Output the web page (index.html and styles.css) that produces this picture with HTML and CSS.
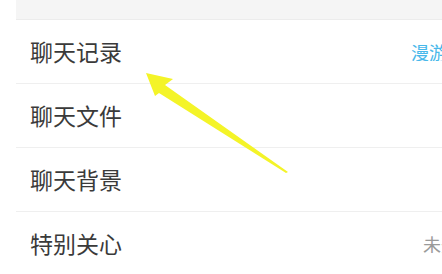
FILE: index.html
```html
<!DOCTYPE html>
<html lang="zh-CN">
<head>
<meta charset="utf-8">
<link rel="stylesheet" href="styles.css">
</head>
<body>
<div class="page">
  <div class="band"></div>
  <div class="list">
    <div class="row"><span class="label">聊天记录</span><span class="val val-blue">漫游记录</span></div>
    <div class="row"><span class="label">聊天文件</span></div>
    <div class="row"><span class="label">聊天背景</span></div>
    <div class="row"><span class="label">特别关心</span><span class="val val-gray">未开启</span></div>
  </div>
  <svg class="arrow" width="442" height="274" viewBox="0 0 442 274">
    <path d="M146 73 L173 79 L165 85 L288 172 L286 173 L159 93 L155 96 Z" fill="#f4f428"/>
  </svg>
</div>
</body>
</html>
```
FILE: styles.css
```css
html, body {
  margin: 0;
  padding: 0;
  background: #ffffff;
  overflow: hidden;
}
.page {
  position: relative;
  width: 442px;
  height: 274px;
  font-family: "Noto Sans CJK SC", "Noto Sans", sans-serif;
}
.band {
  height: 19px;
  margin-left: 16px;
  background: #f5f5f5;
  border-bottom: 1px solid #ececec;
}
.list {
  display: flex;
  flex-direction: column;
}
.row {
  height: 63px;
  margin-left: 16px;
  padding-left: 14px;
  border-bottom: 1px solid #efefef;
  display: flex;
  align-items: center;
  justify-content: space-between;
}
.label {
  font-size: 23px;
  color: #3a3a3a;
  line-height: 1;
}
.val {
  font-size: 18px;
  line-height: 1;
  white-space: nowrap;
  overflow: hidden;
}
.val-blue {
  width: 31px;
  color: #48b8ea;
}
.val-gray {
  width: 19px;
  color: #9a9a9a;
}
.arrow {
  position: absolute;
  left: 0;
  top: 0;
  pointer-events: none;
}
```
